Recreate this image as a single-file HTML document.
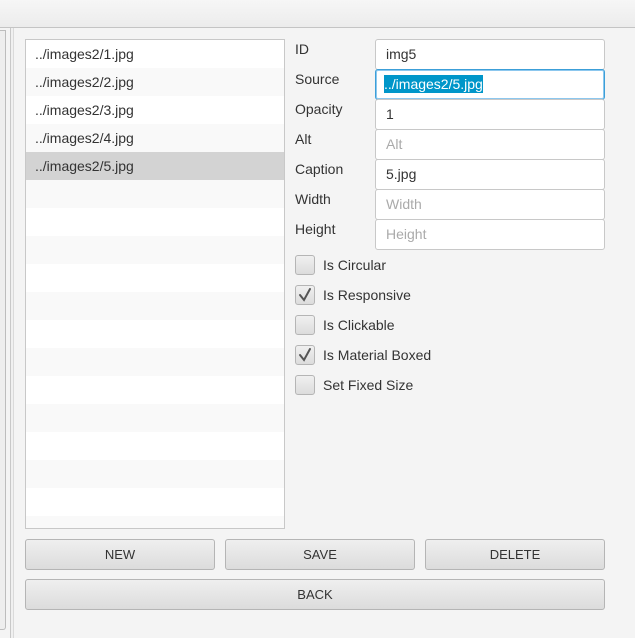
<!DOCTYPE html>
<html><head><style>
*{box-sizing:border-box;margin:0;padding:0}
body{width:635px;height:638px;background:#f4f4f4;font-family:"Segoe UI","Liberation Sans",sans-serif;font-size:14px;color:#333;position:relative;overflow:hidden}
.top{position:absolute;left:0;top:0;width:635px;height:28px;background:linear-gradient(#f6f6f6,#ececec);border-bottom:1px solid #c4c4c4}
.sp{position:absolute;left:0;top:30px;width:6px;height:600px;background:#eee;border:1px solid #bdbdbd;border-left:none;border-radius:0 0 3px 0}
.vl{position:absolute;left:10px;top:28px;width:4px;height:610px;border-left:1px solid #c8c8c8;border-right:1px solid #dadada;background:#f0f0f0}
.list{position:absolute;left:25px;top:39px;width:260px;height:490px;border:1px solid #c8c8c8;background:#fff;overflow:hidden}
.row{height:28px;line-height:28px;padding-left:9px;font-size:14px}
.row:nth-child(even){background:#f9f9f9}
.row.sel{background:#d3d3d3}
.lbl{position:absolute;left:295px;font-size:14px}
.f{position:absolute;left:375px;width:230px;height:31px;background:#fff;border:1px solid #c8c8c8;border-radius:3px;padding-left:10px;line-height:29px}
.ph{color:#aaa}
.f.foc{border:1px solid #3c9fd8;box-shadow:0 0 0 1px #8cc7ee inset}
.hl{background:#0096c9;color:#fff;padding:1px 0}
.cb{position:absolute;left:295px;width:20px;height:20px;border:1px solid #b5b5b5;border-radius:3px;background:linear-gradient(#f0f0f0,#dcdcdc)}
.cl{position:absolute;left:323px;font-size:14px}
.btn{position:absolute;height:31px;border:1px solid #b5b5b5;border-radius:3px;background:linear-gradient(#efefef,#dcdcdc);text-align:center;line-height:29px;font-size:13px}
</style></head><body>
<div class="top"></div>
<div class="sp"></div>
<div class="vl"></div>
<div class="list">
<div class="row">../images2/1.jpg</div><div class="row">../images2/2.jpg</div><div class="row">../images2/3.jpg</div><div class="row">../images2/4.jpg</div><div class="row sel">../images2/5.jpg</div>
<div class="row"></div><div class="row"></div><div class="row"></div><div class="row"></div><div class="row"></div><div class="row"></div><div class="row"></div><div class="row"></div><div class="row"></div><div class="row"></div><div class="row"></div><div class="row"></div><div class="row"></div>
</div>
<div class="lbl" style="top:41px">ID</div>
<div class="lbl" style="top:71px">Source</div>
<div class="lbl" style="top:101px">Opacity</div>
<div class="lbl" style="top:131px">Alt</div>
<div class="lbl" style="top:161px">Caption</div>
<div class="lbl" style="top:191px">Width</div>
<div class="lbl" style="top:221px">Height</div>
<div class="f" style="top:39px">img5</div>
<div class="f foc" style="top:69px;padding-left:8px"><span class="hl">../images2/5.jpg</span></div>
<div class="f" style="top:99px">1</div>
<div class="f ph" style="top:129px">Alt</div>
<div class="f" style="top:159px">5.jpg</div>
<div class="f ph" style="top:189px">Width</div>
<div class="f ph" style="top:219px">Height</div>
<div class="cb" style="top:255px"></div><div class="cl" style="top:257px">Is Circular</div>
<div class="cb" style="top:285px"><svg width="18" height="18"><path d="M4 9 L8 14 L14 3" stroke="#555" stroke-width="2" fill="none" stroke-linecap="round"/></svg></div><div class="cl" style="top:287px">Is Responsive</div>
<div class="cb" style="top:315px"></div><div class="cl" style="top:317px">Is Clickable</div>
<div class="cb" style="top:345px"><svg width="18" height="18"><path d="M4 9 L8 14 L14 3" stroke="#555" stroke-width="2" fill="none" stroke-linecap="round"/></svg></div><div class="cl" style="top:347px">Is Material Boxed</div>
<div class="cb" style="top:375px"></div><div class="cl" style="top:377px">Set Fixed Size</div>
<div class="btn" style="left:25px;top:539px;width:190px">NEW</div>
<div class="btn" style="left:225px;top:539px;width:190px">SAVE</div>
<div class="btn" style="left:425px;top:539px;width:180px">DELETE</div>
<div class="btn" style="left:25px;top:579px;width:580px">BACK</div>
</body></html>
